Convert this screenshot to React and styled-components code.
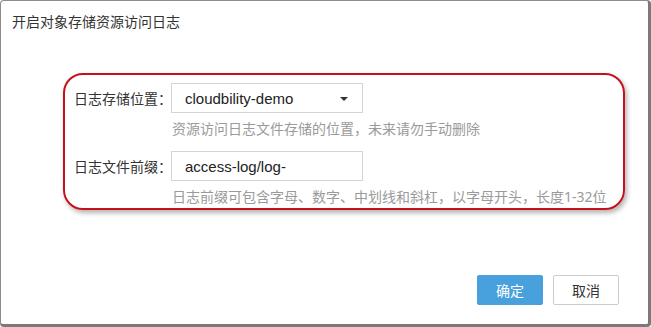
import React from 'react'
import styled, { createGlobalStyle } from 'styled-components'

const GlobalStyle = createGlobalStyle`
    html, body {
        margin: 0;
        padding: 0;
        background: #ffffff;
    }
    body {
        font-family: "Noto Sans", "Noto Sans CJK SC", sans-serif;
    }
`;

const Dialog = styled.div`
    width: 651px;
    height: 327px;
    box-sizing: border-box;
    border: 1px solid #8c8c8c;
    border-right: 3px solid #7a7a7a;
    border-bottom: 3px solid #7a7a7a;
    border-radius: 4px;
    background: #fff;
    display: flex;
    flex-direction: column;
`;

const Title = styled.div`
    padding: 11px 0 0 11px;
    font-size: 14px;
    line-height: 20px;
    color: #333;
`;

const Highlight = styled.div`
    margin: 41px 0 0 62px;
    width: 562px;
    height: 137px;
    box-sizing: border-box;
    border: 2px solid #c8101c;
    border-radius: 20px;
    box-shadow: 2px 3px 5px rgba(0, 0, 0, 0.3);
    padding: 8px 0 0 9px;
`;

const Field = styled.div`
    margin-top: ${p => (p.first ? '0' : '14px')};
`;

const Row = styled.div`
    display: grid;
    grid-template-columns: 97px 192px;
    align-items: center;
`;

const Label = styled.span`
    font-size: 14px;
    color: #333;
    white-space: nowrap;
`;

const Control = styled.div`
    height: 30px;
    box-sizing: border-box;
    border: 1px solid #d4d4d4;
    display: flex;
    align-items: center;
    justify-content: space-between;
    padding: 0 14px 0 13px;
    font-family: "Liberation Sans", "Noto Sans CJK SC", sans-serif;
    font-size: 15px;
    color: #222;
`;

const Caret = styled.span`
    width: 0;
    height: 0;
    border-left: 4px solid transparent;
    border-right: 4px solid transparent;
    border-top: 4px solid #333;
    margin-top: 1px;
`;

const Help = styled.div`
    margin: 8px 0 0 98px;
    font-size: 14px;
    line-height: 16px;
    color: #9a9a9a;
    white-space: nowrap;
`;

const Footer = styled.div`
    margin-top: auto;
    display: flex;
    justify-content: flex-end;
    gap: 10px;
    padding: 0 29px 19px 0;
`;

const Button = styled.button`
    width: 66px;
    height: 30px;
    font-family: "Noto Sans CJK SC", sans-serif;
    font-size: 14px;
    border-radius: 2px;
    cursor: pointer;
    border: 1px solid ${p => (p.primary ? '#48a0dc' : '#cccccc')};
    background: ${p => (p.primary ? '#48a0dc' : '#ffffff')};
    color: ${p => (p.primary ? '#ffffff' : '#333333')};
`;

const App = () => {
    return (
        <>
            <GlobalStyle />
            <Dialog>
                <Title>开启对象存储资源访问日志</Title>
                <Highlight>
                    <Field first>
                        <Row>
                            <Label>日志存储位置：</Label>
                            <Control>
                                cloudbility-demo
                                <Caret />
                            </Control>
                        </Row>
                        <Help>资源访问日志文件存储的位置，未来请勿手动删除</Help>
                    </Field>
                    <Field>
                        <Row>
                            <Label>日志文件前缀：</Label>
                            <Control>access-log/log-</Control>
                        </Row>
                        <Help>日志前缀可包含字母、数字、中划线和斜杠，以字母开头，长度1-32位</Help>
                    </Field>
                </Highlight>
                <Footer>
                    <Button primary>确定</Button>
                    <Button>取消</Button>
                </Footer>
            </Dialog>
        </>
    )
}

export default App
